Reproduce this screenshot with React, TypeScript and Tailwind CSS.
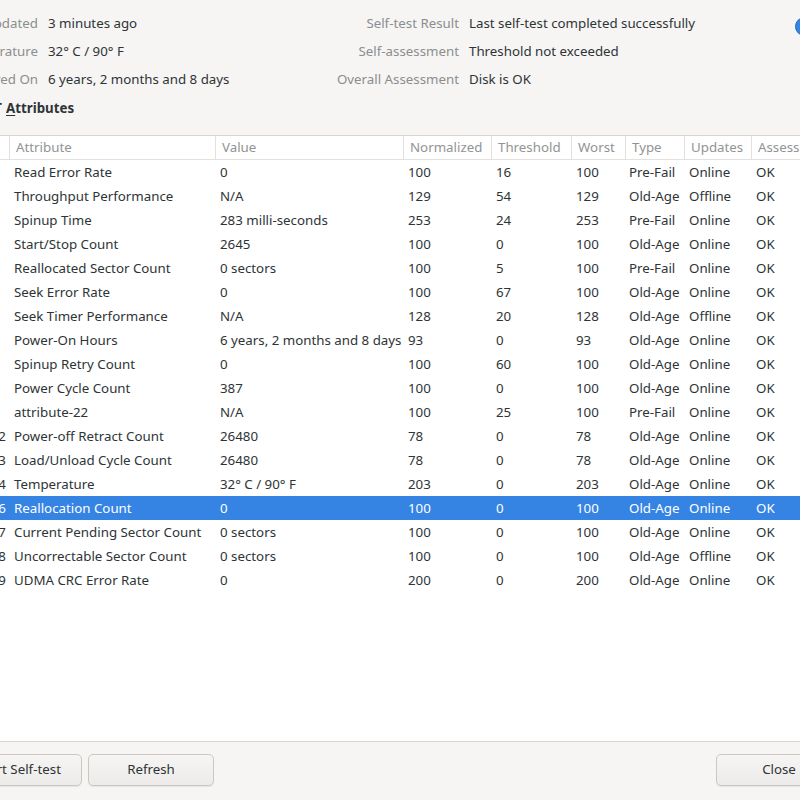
import React from 'react'

type Row = {
  id: number
  name: string
  value: string
  norm: string
  thr: string
  worst: string
  type: string
  updates: string
  assess: string
}

const rows: Row[] = [
  { id: 1, name: 'Read Error Rate', value: '0', norm: '100', thr: '16', worst: '100', type: 'Pre-Fail', updates: 'Online', assess: 'OK' },
  { id: 2, name: 'Throughput Performance', value: 'N/A', norm: '129', thr: '54', worst: '129', type: 'Old-Age', updates: 'Offline', assess: 'OK' },
  { id: 3, name: 'Spinup Time', value: '283 milli-seconds', norm: '253', thr: '24', worst: '253', type: 'Pre-Fail', updates: 'Online', assess: 'OK' },
  { id: 4, name: 'Start/Stop Count', value: '2645', norm: '100', thr: '0', worst: '100', type: 'Old-Age', updates: 'Online', assess: 'OK' },
  { id: 5, name: 'Reallocated Sector Count', value: '0 sectors', norm: '100', thr: '5', worst: '100', type: 'Pre-Fail', updates: 'Online', assess: 'OK' },
  { id: 7, name: 'Seek Error Rate', value: '0', norm: '100', thr: '67', worst: '100', type: 'Old-Age', updates: 'Online', assess: 'OK' },
  { id: 8, name: 'Seek Timer Performance', value: 'N/A', norm: '128', thr: '20', worst: '128', type: 'Old-Age', updates: 'Offline', assess: 'OK' },
  { id: 9, name: 'Power-On Hours', value: '6 years, 2 months and 8 days', norm: '93', thr: '0', worst: '93', type: 'Old-Age', updates: 'Online', assess: 'OK' },
  { id: 10, name: 'Spinup Retry Count', value: '0', norm: '100', thr: '60', worst: '100', type: 'Old-Age', updates: 'Online', assess: 'OK' },
  { id: 12, name: 'Power Cycle Count', value: '387', norm: '100', thr: '0', worst: '100', type: 'Old-Age', updates: 'Online', assess: 'OK' },
  { id: 22, name: 'attribute-22', value: 'N/A', norm: '100', thr: '25', worst: '100', type: 'Pre-Fail', updates: 'Online', assess: 'OK' },
  { id: 192, name: 'Power-off Retract Count', value: '26480', norm: '78', thr: '0', worst: '78', type: 'Old-Age', updates: 'Online', assess: 'OK' },
  { id: 193, name: 'Load/Unload Cycle Count', value: '26480', norm: '78', thr: '0', worst: '78', type: 'Old-Age', updates: 'Online', assess: 'OK' },
  { id: 194, name: 'Temperature', value: '32° C / 90° F', norm: '203', thr: '0', worst: '203', type: 'Old-Age', updates: 'Online', assess: 'OK' },
  { id: 196, name: 'Reallocation Count', value: '0', norm: '100', thr: '0', worst: '100', type: 'Old-Age', updates: 'Online', assess: 'OK' },
  { id: 197, name: 'Current Pending Sector Count', value: '0 sectors', norm: '100', thr: '0', worst: '100', type: 'Old-Age', updates: 'Online', assess: 'OK' },
  { id: 198, name: 'Uncorrectable Sector Count', value: '0 sectors', norm: '100', thr: '0', worst: '100', type: 'Old-Age', updates: 'Offline', assess: 'OK' },
  { id: 199, name: 'UDMA CRC Error Rate', value: '0', norm: '200', thr: '0', worst: '200', type: 'Old-Age', updates: 'Online', assess: 'OK' },
]

const cols = 'grid grid-cols-[32px_206px_188px_88px_80px_54px_59px_67px_120px]'

const headers = ['ID', 'Attribute', 'Value', 'Normalized', 'Threshold', 'Worst', 'Type', 'Updates', 'Assessment']

function InfoRow({ label, value }: { label: string; value: string }) {
  return (
    <>
      <div className="h-[28px] leading-[28px] text-right text-[#8b8e8e] whitespace-nowrap">{label}</div>
      <div className="h-[28px] leading-[28px] text-[#2e3436] whitespace-nowrap">{value}</div>
    </>
  )
}

function Button({ label }: { label: string }) {
  return (
    <button className="h-[32px] w-[126px] rounded-[5px] border border-[#cdc7c2] bg-gradient-to-b from-[#f6f5f4] to-[#edebe9] text-[#2e3436] shadow-[0_1px_1px_rgba(0,0,0,0.07)]">
      {label}
    </button>
  )
}

export default function App() {
  return (
    <div className="w-[800px] h-[800px] overflow-hidden bg-[#f6f5f4] flex flex-col text-[13.3px] font-['Noto_Sans',sans-serif] text-[#2e3436]">
      {/* Info */}
      <div className="flex ml-[-100px] pt-[9px]">
        <div className="grid grid-cols-[138px_auto] gap-x-[10px] w-[400px] shrink-0">
          <InfoRow label="Last Updated" value="3 minutes ago" />
          <InfoRow label="Temperature" value="32° C / 90° F" />
          <InfoRow label="Powered On" value="6 years, 2 months and 8 days" />
        </div>
        <div className="grid grid-cols-[159px_auto] content-start gap-x-[10px] w-[495px] shrink-0">
          <InfoRow label="Self-test Result" value="Last self-test completed successfully" />
          <InfoRow label="Self-assessment" value="Threshold not exceeded" />
          <InfoRow label="Overall Assessment" value="Disk is OK" />
        </div>
        <div className="pt-[8px] shrink-0">
          <div className="w-[48px] h-[19px] rounded-full bg-[#3584e4] border border-[#1b6acb]" />
        </div>
      </div>

      {/* Heading */}
      <div className="flex mt-[5px] mb-[17px] leading-[20px] font-bold ml-[-100px]">
        <div className="w-[106px] text-right pr-[4px]">SMART</div>
        <div>
          <span className="underline underline-offset-2">A</span>ttributes
        </div>
      </div>

      {/* Table */}
      <div className="flex-1 bg-white border-t border-[#d8d4d0] ml-[-23px] w-[823px]">
        <div className={`${cols} h-[24px] border-b border-[#e3e0dd] text-[#919494]`}>
          {headers.map((h, i) => (
            <div key={h} className={`leading-[23px] pl-[6px] whitespace-nowrap overflow-hidden ${i > 0 ? 'border-l border-[#e3e0dd]' : ''}`}>
              {h}
            </div>
          ))}
        </div>
        {rows.map((r) => {
          const sel = r.id === 196
          return (
            <div key={r.id} className={`${cols} h-[24px] leading-[24px] whitespace-nowrap ${sel ? 'bg-[#3584e4] text-white' : ''}`}>
              <div className="pl-[6px]">{r.id}</div>
              <div className="pl-[5px]">{r.name}</div>
              <div className="pl-[5px]">{r.value}</div>
              <div className="pl-[5px]">{r.norm}</div>
              <div className="pl-[5px]">{r.thr}</div>
              <div className="pl-[5px]">{r.worst}</div>
              <div className="pl-[4px]">{r.type}</div>
              <div className="pl-[5px]">{r.updates}</div>
              <div className="pl-[5px]">{r.assess}</div>
            </div>
          )
        })}
      </div>

      {/* Action bar */}
      <div className="h-[59px] shrink-0 border-t border-[#d8d4d0] ml-[-44px] w-[886px] flex justify-between items-start pt-[12px]">
        <div className="flex gap-[6px]">
          <Button label="Start Self-test" />
          <Button label="Refresh" />
        </div>
        <Button label="Close" />
      </div>
    </div>
  )
}
